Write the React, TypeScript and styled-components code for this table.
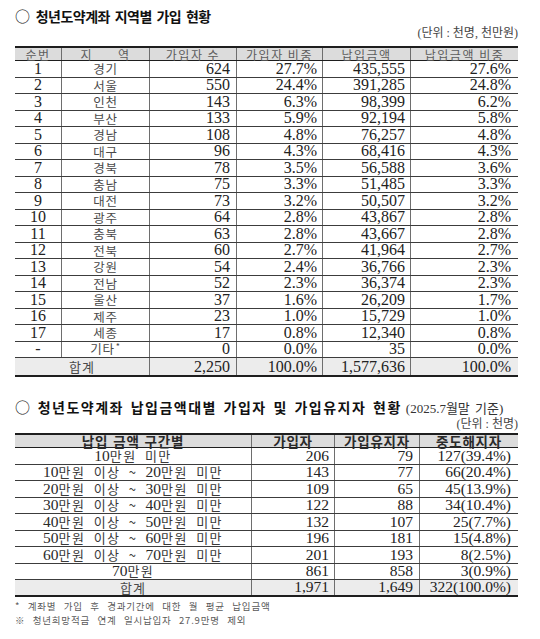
import React from 'react';
import styled, { createGlobalStyle } from 'styled-components';

const GlobalStyle = createGlobalStyle`
  html, body { margin: 0; padding: 0; background: #ffffff; }
  body { font-family: "Liberation Serif", "Noto Sans CJK KR", serif; color: #222; }
  * { box-sizing: border-box; }
`;

const KO = '"Noto Sans CJK KR", "Noto Sans", sans-serif';
const SERIF = '"Liberation Serif", "Noto Sans CJK KR", serif';

const COLS1 = '46px 88px 87px 86px 88px 108px';
const COLS2 = '236px 83px 85px 99px';

const Page = styled.div`
  width: 540px;
  height: 639px;
  padding: 6px 22px 0 15px;
  display: flex;
  flex-direction: column;
`;

const Title = styled.h2<{ $mt?: number; $ls?: number }>`
  margin: ${(p) => p.$mt ?? 0}px 0 0;
  height: 20px;
  line-height: 20px;
  font-family: ${KO};
  font-weight: 700;
  font-size: 14px;
  color: #111;
  letter-spacing: ${(p) => p.$ls ?? 0}px;
  word-spacing: 2px;
  white-space: pre;
  display: flex;
  align-items: baseline;
`;

const Circle = styled.span`
  font-size: 15px;
  font-weight: 400;
  margin-right: 1px;
  letter-spacing: 0;
  word-spacing: 0;
`;

const TitleNote = styled.span`
  font-family: ${SERIF};
  font-weight: 400;
  font-size: 13px;
  color: #333;
  letter-spacing: 0;
  word-spacing: 2px;
  margin-left: 4px;
`;

const Unit = styled.div<{ $mb: number }>`
  height: 14px;
  line-height: 14px;
  margin-bottom: ${(p) => p.$mb}px;
  text-align: right;
  font-family: ${SERIF};
  font-size: 12px;
  color: #444;
  white-space: pre;
`;

const Table = styled.div`
  width: 503px;
  border-top: 2px solid #1e1e1e;
`;

const Row = styled.div<{ $cols: string }>`
  display: grid;
  grid-template-columns: ${(p) => p.$cols};
  box-sizing: content-box;
`;

const HeaderRow = styled(Row)<{ $h: number; $bw: number }>`
  height: ${(p) => p.$h}px;
  background: #dcdcdc;
  border-bottom: ${(p) => p.$bw}px solid #1e1e1e;
`;

const BodyRow = styled(Row)`
  height: 15.5px;
  border-bottom: 1px solid #3c3c3c;
`;

const TotalRow = styled(Row)<{ $h: number }>`
  height: ${(p) => p.$h}px;
  background: #ececec;
  border-bottom: 2px solid #1e1e1e;
`;

const Cell = styled.div<{ $align?: 'center' | 'right'; $pr?: number; $span?: number }>`
  display: flex;
  align-items: center;
  justify-content: ${(p) => (p.$align === 'right' ? 'flex-end' : 'center')};
  padding-right: ${(p) => (p.$align === 'right' ? p.$pr ?? 6 : 0)}px;
  grid-column: ${(p) => (p.$span ? `span ${p.$span}` : 'auto')};
  white-space: pre;
  line-height: 1;
  overflow: visible;
  & + & {
    border-left: 1px solid #6e6e6e;
  }
`;

const Num = styled.span<{ $size?: number }>`
  display: inline-block;
  line-height: 14px;
  font-family: "Liberation Serif", serif;
  font-size: ${(p) => p.$size ?? 16}px;
  color: #222;
`;

const Ko = styled.span<{ $size?: number; $ls?: number }>`
  display: inline-block;
  line-height: 13px;
  font-family: ${KO};
  font-size: ${(p) => p.$size ?? 13}px;
  letter-spacing: ${(p) => p.$ls ?? 0}px;
  color: #4a4a4a;
`;

const HeadText = styled.span`
  display: inline-block;
  line-height: 11px;
  font-family: ${KO};
  font-size: 12px;
  letter-spacing: 1.5px;
  color: #5c5c5c;
`;

const HeadBold = styled.span`
  display: inline-block;
  line-height: 11px;
  font-family: ${KO};
  font-size: 13.5px;
  font-weight: 700;
  letter-spacing: 0.8px;
  word-spacing: 1px;
  color: #2a2a2a;
`;

const Sup = styled.span`
  font-size: 9px;
  position: relative;
  top: -4px;
  margin-left: 1px;
`;

const Mixed = styled.span`
  display: inline-block;
  line-height: 14px;
  font-family: ${KO};
  font-size: 13px;
  letter-spacing: 1.4px;
  word-spacing: 4px;
  color: #3a3a3a;
`;

const MixedNum = styled.span`
  font-family: "Liberation Serif", serif;
  font-size: 15.5px;
  letter-spacing: 0;
  color: #2a2a2a;
`;

const Notes = styled.div`
  margin-top: 2px;
  display: flex;
  flex-direction: column;
`;

const Note = styled.div`
  height: 14px;
  line-height: 14px;
  font-family: ${KO};
  font-size: 9.5px;
  letter-spacing: 0.8px;
  word-spacing: 4.5px;
  color: #5a5a5a;
  white-space: pre;
`;

type R1 = [string, string, string, string, string, string];

const rows1: R1[] = [
  ['1', '경기', '624', '27.7%', '435,555', '27.6%'],
  ['2', '서울', '550', '24.4%', '391,285', '24.8%'],
  ['3', '인천', '143', '6.3%', '98,399', '6.2%'],
  ['4', '부산', '133', '5.9%', '92,194', '5.8%'],
  ['5', '경남', '108', '4.8%', '76,257', '4.8%'],
  ['6', '대구', '96', '4.3%', '68,416', '4.3%'],
  ['7', '경북', '78', '3.5%', '56,588', '3.6%'],
  ['8', '충남', '75', '3.3%', '51,485', '3.3%'],
  ['9', '대전', '73', '3.2%', '50,507', '3.2%'],
  ['10', '광주', '64', '2.8%', '43,867', '2.8%'],
  ['11', '충북', '63', '2.8%', '43,667', '2.8%'],
  ['12', '전북', '60', '2.7%', '41,964', '2.7%'],
  ['13', '강원', '54', '2.4%', '36,766', '2.3%'],
  ['14', '전남', '52', '2.3%', '36,374', '2.3%'],
  ['15', '울산', '37', '1.6%', '26,209', '1.7%'],
  ['16', '제주', '23', '1.0%', '15,729', '1.0%'],
  ['17', '세종', '17', '0.8%', '12,340', '0.8%'],
  ['-', '기타', '0', '0.0%', '35', '0.0%'],
];

type R2 = [string, string, string, string];

const rows2: R2[] = [
  ['10만원 미만', '206', '79', '127(39.4%)'],
  ['10만원 이상 ~ 20만원 미만', '143', '77', '66(20.4%)'],
  ['20만원 이상 ~ 30만원 미만', '109', '65', '45(13.9%)'],
  ['30만원 이상 ~ 40만원 미만', '122', '88', '34(10.4%)'],
  ['40만원 이상 ~ 50만원 미만', '132', '107', '25(7.7%)'],
  ['50만원 이상 ~ 60만원 미만', '196', '181', '15(4.8%)'],
  ['60만원 이상 ~ 70만원 미만', '201', '193', '8(2.5%)'],
  ['70만원', '861', '858', '3(0.9%)'],
];

function MixedText({ text }: { text: string }) {
  const parts = text.split(/(\d+)/).filter((s) => s.length > 0);
  return (
    <Mixed>
      {parts.map((s, i) =>
        /^\d+$/.test(s) ? (
          <MixedNum key={i}>{s}</MixedNum>
        ) : (
          <React.Fragment key={i}>{s}</React.Fragment>
        ),
      )}
    </Mixed>
  );
}

export default function App() {
  return (
    <>
      <GlobalStyle />
      <Page>
        <Title $ls={-0.5}>
          <Circle>○</Circle>
          {' 청년도약계좌 지역별 가입 현황'}
        </Title>
        <Unit $mb={6}>{'(단위 : 천명, 천만원)'}</Unit>

        <Table>
          <HeaderRow $cols={COLS1} $h={12} $bw={1}>
            <Cell><HeadText>순번</HeadText></Cell>
            <Cell><HeadText>{'지      역'}</HeadText></Cell>
            <Cell><HeadText>{'가입자 수'}</HeadText></Cell>
            <Cell><HeadText>{'가입자 비중'}</HeadText></Cell>
            <Cell><HeadText>납입금액</HeadText></Cell>
            <Cell><HeadText>{'납입금액 비중'}</HeadText></Cell>
          </HeaderRow>
          {rows1.map((r) => (
            <BodyRow key={r[0] + r[1]} $cols={COLS1}>
              <Cell><Num>{r[0]}</Num></Cell>
              <Cell>
                <Ko $size={12.5} $ls={0.8}>
                  {r[1]}
                  {r[1] === '기타' && <Sup>*</Sup>}
                </Ko>
              </Cell>
              <Cell $align="right" $pr={6}><Num>{r[2]}</Num></Cell>
              <Cell $align="right" $pr={5}><Num>{r[3]}</Num></Cell>
              <Cell $align="right" $pr={5}><Num>{r[4]}</Num></Cell>
              <Cell $align="right" $pr={7}><Num>{r[5]}</Num></Cell>
            </BodyRow>
          ))}
          <TotalRow $cols={COLS1} $h={17}>
            <Cell $span={2}><Ko $size={13} $ls={1}>합계</Ko></Cell>
            <Cell $align="right" $pr={6}><Num>2,250</Num></Cell>
            <Cell $align="right" $pr={5}><Num>100.0%</Num></Cell>
            <Cell $align="right" $pr={5}><Num>1,577,636</Num></Cell>
            <Cell $align="right" $pr={7}><Num>100.0%</Num></Cell>
          </TotalRow>
        </Table>

        <Title $mt={20} $ls={1.5}>
          <Circle>○</Circle>
          {' 청년도약계좌 납입금액대별 가입자 및 가입유지자 현황'}
          <TitleNote>(2025.7월말 기준)</TitleNote>
        </Title>
        <Unit $mb={2}>{'(단위 : 천명)'}</Unit>

        <Table>
          <HeaderRow $cols={COLS2} $h={12} $bw={1.5}>
            <Cell><HeadBold>{'납입 금액 구간별'}</HeadBold></Cell>
            <Cell><HeadBold>가입자</HeadBold></Cell>
            <Cell><HeadBold>가입유지자</HeadBold></Cell>
            <Cell><HeadBold>중도해지자</HeadBold></Cell>
          </HeaderRow>
          {rows2.map((r) => (
            <BodyRow key={r[0]} $cols={COLS2}>
              <Cell><MixedText text={r[0]} /></Cell>
              <Cell $align="right" $pr={5}><Num $size={15.5}>{r[1]}</Num></Cell>
              <Cell $align="right" $pr={6}><Num $size={15.5}>{r[2]}</Num></Cell>
              <Cell $align="right" $pr={7}><Num $size={15.5}>{r[3]}</Num></Cell>
            </BodyRow>
          ))}
          <TotalRow $cols={COLS2} $h={14.5}>
            <Cell><Ko $size={13} $ls={1}>합계</Ko></Cell>
            <Cell $align="right" $pr={5}><Num $size={15.5}>1,971</Num></Cell>
            <Cell $align="right" $pr={6}><Num $size={15.5}>1,649</Num></Cell>
            <Cell $align="right" $pr={7}><Num $size={15.5}>322(100.0%)</Num></Cell>
          </TotalRow>
        </Table>

        <Notes>
          <Note>{'* 계좌별 가입 후 경과기간에 대한 월 평균 납입금액'}</Note>
          <Note>{'※ 청년희망적금 연계 일시납입자 27.9만명 제외'}</Note>
        </Notes>
      </Page>
    </>
  );
}
